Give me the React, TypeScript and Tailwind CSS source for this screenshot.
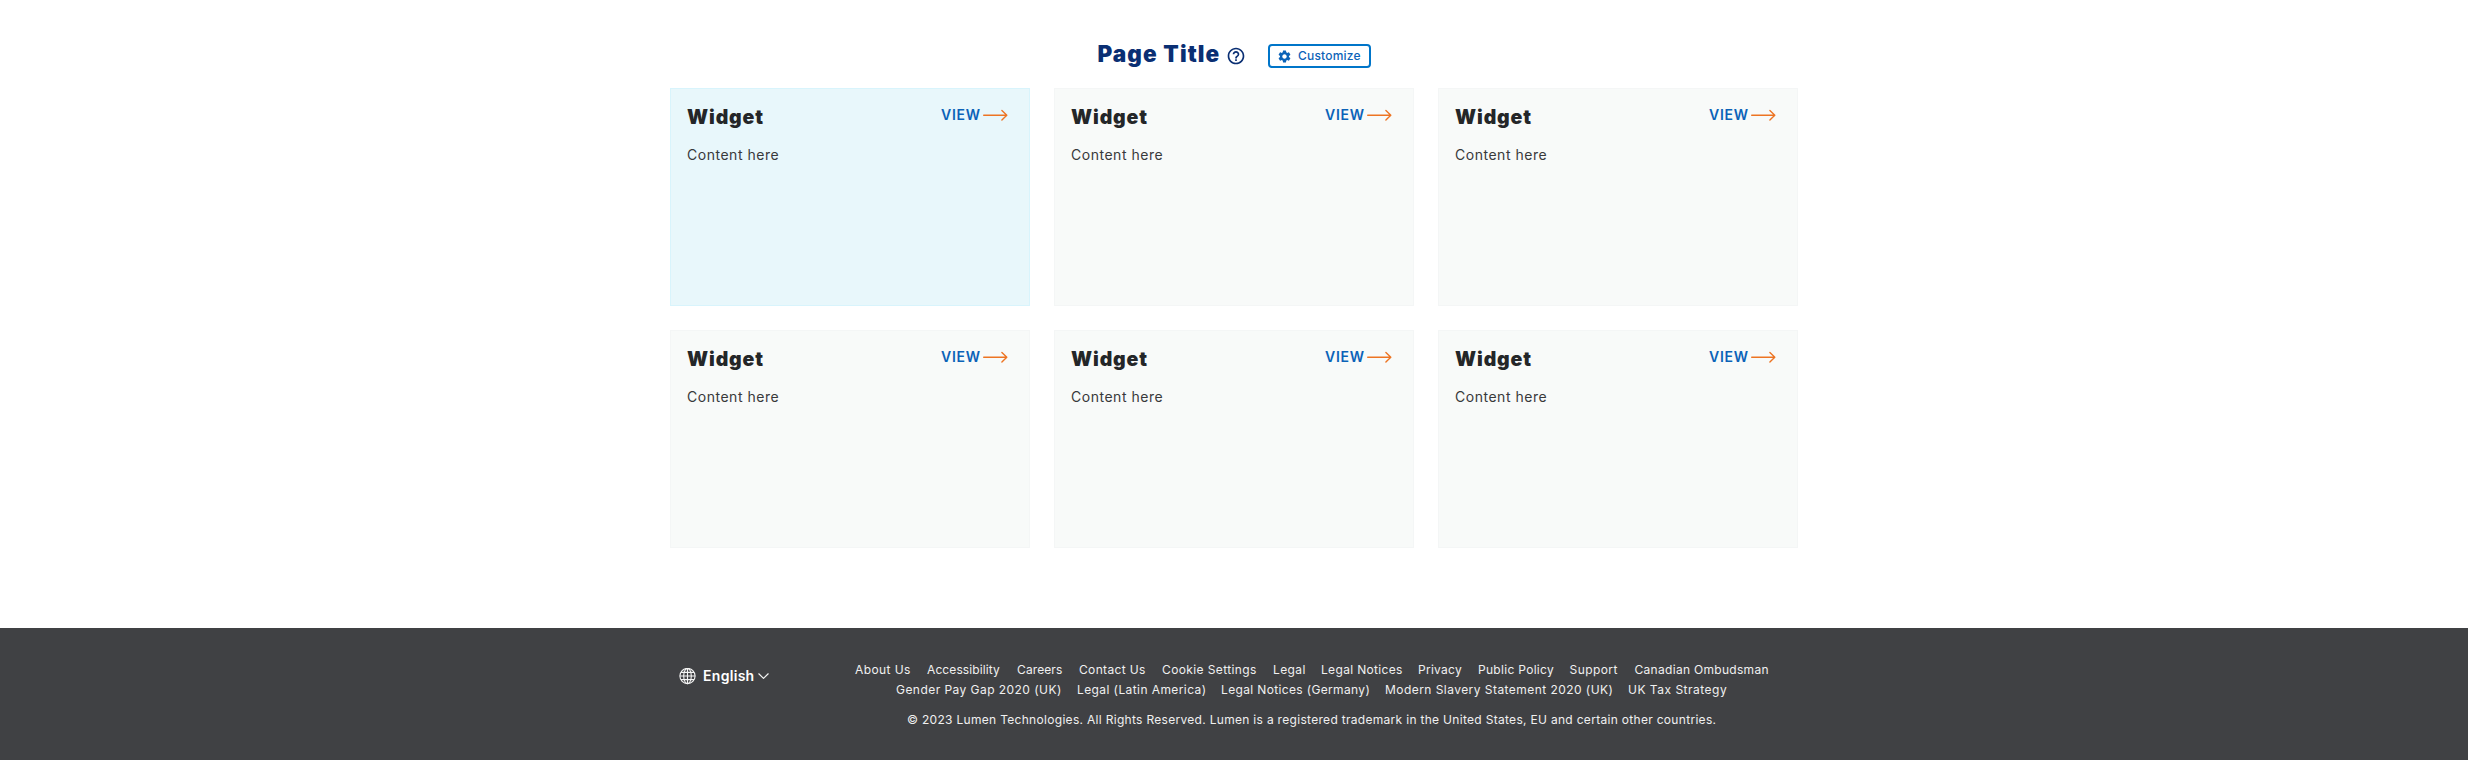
import { MdHelpOutline, MdSettings } from "react-icons/md";

const PRIMARY_LINKS = [
  { label: "About Us", box: "w-[56px] tracking-[0.41px]" },
  { label: "Accessibility", box: "w-[74px] tracking-[0.1px]" },
  { label: "Careers", box: "w-[46px] tracking-[0.11px]" },
  { label: "Contact Us", box: "w-[67px] tracking-[0.35px]" },
  { label: "Cookie Settings", box: "w-[95px] tracking-[0.38px]" },
  { label: "Legal", box: "w-[32px] tracking-[0.4px]" },
  { label: "Legal Notices", box: "w-[81px] tracking-[0.33px]" },
  { label: "Privacy", box: "w-[44px] tracking-[0.28px]" },
  { label: "Public Policy", box: "w-[75.5px] tracking-[0.3px]" },
  { label: "Support", box: "w-[49px] tracking-[0.43px]" },
  { label: "Canadian Ombudsman", box: "w-[135px] tracking-[0.3px]" },
];

const SECONDARY_LINKS = [
  { label: "Gender Pay Gap 2020 (UK)", box: "w-[165px] tracking-[0.45px]" },
  { label: "Legal (Latin America)", box: "w-[128px] tracking-[0.41px]" },
  { label: "Legal Notices (Germany)", box: "w-[148px] tracking-[0.35px]" },
  { label: "Modern Slavery Statement 2020 (UK)", box: "w-[227px] tracking-[0.45px]" },
  { label: "UK Tax Strategy", box: "w-[99px] tracking-[0.5px]" },
];

function ArrowIcon() {
  return (
    <svg width="25" height="12" viewBox="0 0 25 12" fill="none" stroke="#ed7423" strokeWidth="1.4" strokeLinecap="round" strokeLinejoin="round">
      <path d="M0.7 6.3H23.6M18.9 1.6L23.8 6.3L18.9 11" />
    </svg>
  );
}

function GlobeIcon() {
  return (
    <svg width="17" height="17" viewBox="0 0 17 17" fill="none" stroke="#f4f4f4" strokeWidth="1.1">
      <circle cx="8.5" cy="8" r="7.6" />
      <ellipse cx="8.5" cy="8" rx="3.8" ry="7.6" />
      <path d="M8.5 0.4V15.6M0.9 8H16.1M2 4.4H15M2 11.6H15" />
    </svg>
  );
}

function Widget({ active = false }: { active?: boolean }) {
  return (
    <section
      className={
        active
          ? "h-[218px] border border-[#d8f4fc] bg-[#e8f7fb] pt-3.5 pr-[21px] pl-4"
          : "h-[218px] border border-[#f4f6f6] bg-[#f8faf9] pt-3.5 pr-[21px] pl-4"
      }
    >
      <div className="flex items-start justify-between">
        <h2 className="text-[19.5px] leading-7 font-black tracking-[0.88px] text-[#242628]">Widget</h2>
        <a href="#" className="mt-0.5 flex h-5 items-center text-sm leading-5 font-semibold text-[#0c63b8]">
          <span className="w-[42px] tracking-[0.75px]">VIEW</span>
          <ArrowIcon />
        </a>
      </div>
      <p className="mt-3.5 text-sm leading-5 tracking-[0.52px] text-[#38393b]">Content here</p>
    </section>
  );
}

function LinkRow({ links }: { links: { label: string; box: string }[] }) {
  return (
    <ul className="flex h-5 gap-4">
      {links.map((link) => (
        <li key={link.label} className={link.box}>
          <a href="#" className="whitespace-nowrap">{link.label}</a>
        </li>
      ))}
    </ul>
  );
}

export default function App() {
  return (
    <div className="flex h-[760px] flex-col bg-white font-['Inter','Liberation_Sans',sans-serif]">
      <main className="mx-auto w-[1128px] flex-1">
        <header className="flex h-[88px] pt-[38px] pl-[427.5px]">
          <h1 className="w-[128.5px] text-[22.5px] leading-8 font-black tracking-[1.1px] whitespace-nowrap text-[#0a2f73]">
            Page Title
          </h1>
          <MdHelpOutline className="mt-2 size-[20px] text-[#0a2f73]" />
          <button className="mt-1.5 ml-[22px] flex h-6 w-[103px] items-center rounded-[4px] border-2 border-[#0075c9] pl-[7px] text-xs font-medium text-[#0c63b8]">
            <MdSettings className="size-[15px]" />
            <span className="ml-[6px] tracking-[0.2px]">Customize</span>
          </button>
        </header>
        <div className="grid grid-cols-3 gap-6">
          <Widget active />
          <Widget />
          <Widget />
          <Widget />
          <Widget />
          <Widget />
        </div>
      </main>
      <footer className="h-[132px] bg-[#404144] text-[#f0f0f0]">
        <div className="mx-auto flex w-[1128px] pt-8">
          <button className="mt-1.5 flex h-5 w-[185px] items-center pl-[8.5px] text-sm leading-5 font-semibold text-white">
            <GlobeIcon />
            <span className="ml-[7.5px] w-[54px] text-left tracking-[0.3px]">English</span>
            <svg className="ml-px" width="11" height="7" viewBox="0 0 11 7" fill="none" stroke="#f4f4f4" strokeWidth="1.2" strokeLinecap="round" strokeLinejoin="round">
              <path d="M0.8 0.8L5.5 5.4L10.2 0.8" />
            </svg>
          </button>
          <div className="flex flex-col items-start text-xs leading-5">
            <LinkRow links={PRIMARY_LINKS} />
            <div className="pl-[41px]">
              <LinkRow links={SECONDARY_LINKS} />
            </div>
            <p className="mt-2.5 pl-[52px] tracking-[0.304px] whitespace-nowrap">
              © 2023 Lumen Technologies. All Rights Reserved. Lumen is a registered trademark in the United States, EU and certain other countries.
            </p>
          </div>
        </div>
      </footer>
    </div>
  );
}
